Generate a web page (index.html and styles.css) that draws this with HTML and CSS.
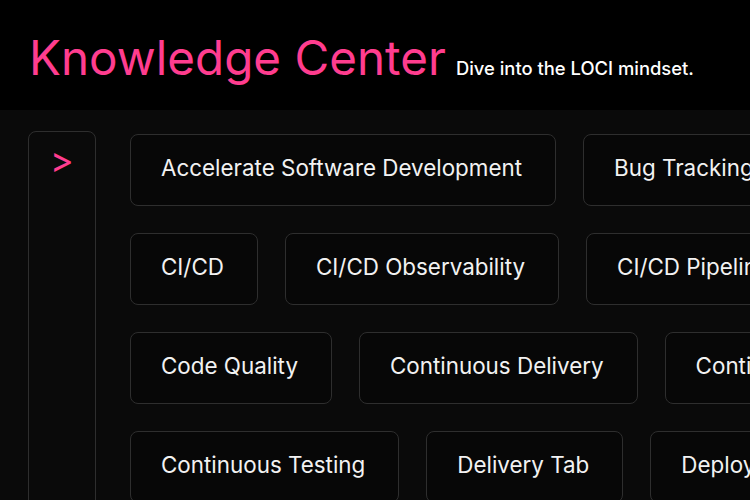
FILE: index.html
```html
<!DOCTYPE html>
<html>
<head>
<meta charset="utf-8">
<link rel="stylesheet" href="styles.css">
</head>
<body>
<header class="header">
  <h1 class="title">Knowledge Center</h1>
  <span class="subtitle">Dive into the LOCI mindset.</span>
</header>
<main class="main">
  <aside class="sidebar"><span class="toggle">&gt;</span></aside>
  <section class="topics">
    <div class="row">
      <a class="topic">Accelerate Software Development</a>
      <a class="topic">Bug Tracking</a>
    </div>
    <div class="row">
      <a class="topic">CI/CD</a>
      <a class="topic">CI/CD Observability</a>
      <a class="topic">CI/CD Pipeline</a>
    </div>
    <div class="row">
      <a class="topic">Code Quality</a>
      <a class="topic">Continuous Delivery</a>
      <a class="topic">Continuous Integration</a>
    </div>
    <div class="row">
      <a class="topic">Continuous Testing</a>
      <a class="topic">Delivery Tab</a>
      <a class="topic">Deployment</a>
    </div>
  </section>
</main>
</body>
</html>
```
FILE: styles.css
```css
* { box-sizing: border-box; }
html, body { margin: 0; padding: 0; }
body {
  width: 750px;
  height: 500px;
  overflow: hidden;
  background: #0a0a0a;
  font-family: Inter, "Noto Sans", sans-serif;
  color: #f2f2f2;
}
.header {
  height: 110px;
  background: #000;
  display: flex;
  align-items: baseline;
  padding: 28px 0 0 29px;
  gap: 10px;
}
.title {
  margin: 0;
  font-size: 47.6px;
  font-weight: 400;
  color: #ff3d8f;
  line-height: 60px;
}
.subtitle {
  font-size: 18.4px;
  font-weight: 500;
  color: #fff;
  white-space: nowrap;
}
.main {
  display: flex;
  padding: 21px 0 0 28px;
  gap: 34px;
  height: 390px;
}
.sidebar {
  flex: 0 0 68px;
  height: 400px;
  border: 1px solid #2e2e2e;
  border-radius: 8px;
  display: flex;
  justify-content: center;
  padding-top: 8px;
}
.toggle {
  color: #ff3d8f;
  font-size: 36px;
  line-height: 40px;
  font-weight: 400;
}
.topics {
  display: flex;
  flex-direction: column;
  gap: 27px;
  padding-top: 3px;
  min-width: 0;
}
.row {
  display: flex;
  gap: 27px;
}
.topic {
  flex: 0 0 auto;
  height: 72px;
  display: flex;
  align-items: center;
  padding: 0 33px 5px 30px;
  border: 1px solid #2e2e2e;
  border-radius: 8px;
  background: #070707;
  font-size: 22.4px;
  white-space: nowrap;
  color: #f2f2f2;
}
```
